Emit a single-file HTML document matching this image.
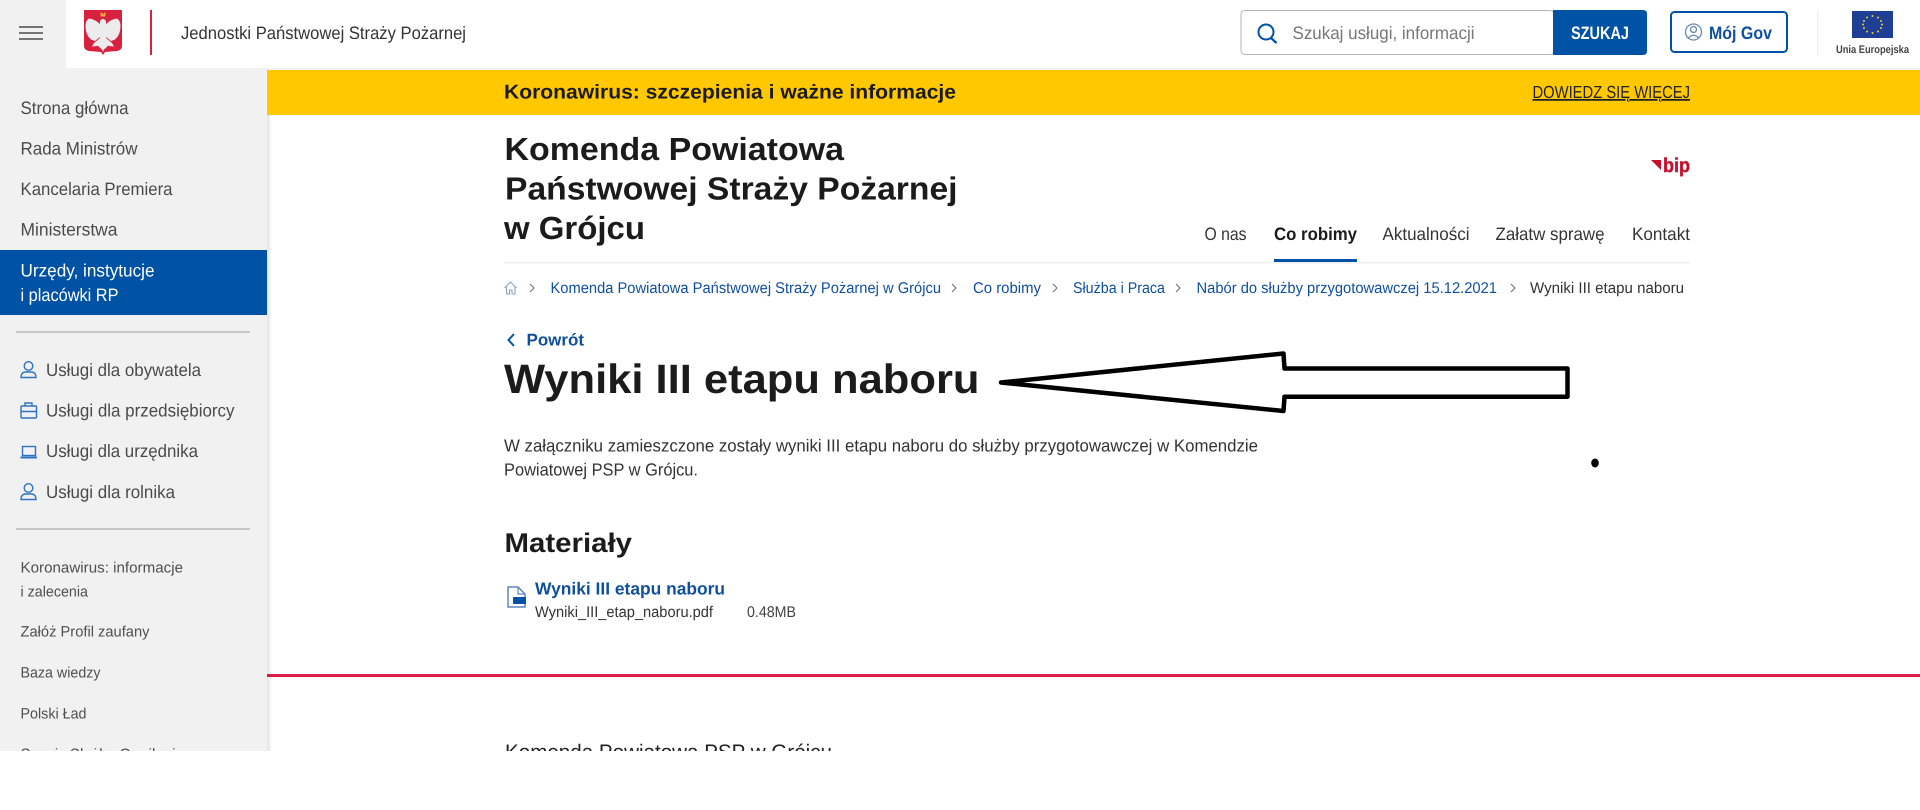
<!DOCTYPE html>
<html lang="pl"><head><meta charset="utf-8"><title>Wyniki III etapu naboru</title>
<style>
html,body{margin:0;padding:0;background:#fff;width:1920px;height:810px;overflow:hidden}
svg{display:block}
text{font-family:"Liberation Sans",sans-serif;text-rendering:geometricPrecision;white-space:pre}
.s{font-size:18px;fill:#4a4a4a}
.m{font-size:15px;fill:#4f4f4f}
.n{font-size:18px;fill:#333}
.b{font-size:15.5px;fill:#0f4f9e}
.i{fill:none;stroke:#2f72c4;stroke-width:1.4}
</style></head><body>
<svg xmlns="http://www.w3.org/2000/svg" width="1920" height="810" viewBox="0 0 1920 810">
<defs>
<linearGradient id="sh" x1="0" x2="1" y1="0" y2="0"><stop offset="0" stop-color="#e2e2e2"/><stop offset="1" stop-color="#fff"/></linearGradient>
<g id="wing"><path d="M101 25Q95 19 89 18.500Q85.500 20.500 85.500 26Q85.500 35 91 39.500L95 41L100 37Z"/><path d="M100 38L94 43L92 46.500L97 46L100 43Z"/></g>
</defs>
<rect width="1920" height="810" fill="#fff"/>

<!-- header -->
<rect x="0" y="68" width="1920" height="2" fill="#f1f1f1"/>
<rect x="0" y="0" width="66" height="68" fill="#f1f1f1"/>
<g fill="#757575"><rect x="19" y="26" width="24" height="2"/><rect x="19" y="32" width="24" height="2"/><rect x="19" y="38" width="24" height="2"/></g>
<path d="M84 10H122V46Q122 50 117 51L105 52L103 55L101 52L89 51Q84 50 84 46Z" fill="#d8203f"/>
<g fill="#ececec">
<use href="#wing"/><use href="#wing" transform="matrix(-1 0 0 1 206 0)"/>
<path d="M100 21Q103 17 106 21L106 38L109 45L104 49.500L103 52L102 49.500L97 45L100 38Z"/>
</g>
<path d="M100.500 12L103 14L105.500 12L105.500 16.500H100.500Z" fill="#e6a93b"/>
<rect x="150" y="10" width="2" height="45" fill="#d8203f"/>
<text x="181" y="39" font-size="18" fill="#333" textLength="285" lengthAdjust="spacingAndGlyphs">Jednostki Państwowej Straży Pożarnej</text>

<rect x="1241" y="10.500" width="313" height="44" rx="4" fill="#fff" stroke="#b5b5b5"/>
<path d="M1553 10H1643Q1647 10 1647 14V51Q1647 55 1643 55H1553Z" fill="#0052a5"/>
<circle cx="1266" cy="32" r="7.500" fill="none" stroke="#0052a5" stroke-width="2"/>
<path d="M1271 38L1276.500 43" stroke="#0052a5" stroke-width="2.300" fill="none"/>
<text x="1292.500" y="39" font-size="18" fill="#777" textLength="182" lengthAdjust="spacingAndGlyphs">Szukaj usługi, informacji</text>
<text x="1571" y="39" font-size="18" font-weight="700" fill="#fff" textLength="58" lengthAdjust="spacingAndGlyphs">SZUKAJ</text>
<rect x="1671" y="12" width="116" height="40" rx="3.500" fill="#fff" stroke="#0052a5" stroke-width="2"/>
<circle cx="1693.500" cy="32" r="8" fill="none" stroke="#6a88b8" stroke-width="1.300"/>
<circle cx="1693.500" cy="29.500" r="3" fill="none" stroke="#6a88b8" stroke-width="1.300"/>
<path d="M1688.500 38Q1693.500 32.500 1698.500 38" fill="none" stroke="#6a88b8" stroke-width="1.300"/>
<text x="1709" y="39" font-size="18" font-weight="700" fill="#0f4f9e" textLength="63" lengthAdjust="spacingAndGlyphs">Mój Gov</text>
<rect x="1817" y="10" width="1.500" height="46" fill="#efefef"/>
<rect x="1852" y="11" width="41" height="27" fill="#1f3f94"/>
<g fill="#e8d23a"><circle cx="1872.500" cy="16" r="1"/><circle cx="1878" cy="17.500" r="1"/><circle cx="1881" cy="21" r="1"/><circle cx="1882" cy="24.500" r="1"/><circle cx="1881" cy="28" r="1"/><circle cx="1878" cy="31.500" r="1"/><circle cx="1872.500" cy="33" r="1"/><circle cx="1867" cy="31.500" r="1"/><circle cx="1864" cy="28" r="1"/><circle cx="1863" cy="24.500" r="1"/><circle cx="1864" cy="21" r="1"/><circle cx="1867" cy="17.500" r="1"/></g>
<text x="1836" y="53" font-size="11" font-weight="700" fill="#444" textLength="73" lengthAdjust="spacingAndGlyphs">Unia Europejska</text>

<!-- sidebar -->
<rect x="0" y="70" width="267" height="690" fill="#f1f1f1"/>
<rect x="267" y="70" width="5" height="690" fill="url(#sh)"/>
<text class="s" x="20.500" y="114" textLength="108" lengthAdjust="spacingAndGlyphs">Strona główna</text>
<text class="s" x="20.500" y="154.500" textLength="117" lengthAdjust="spacingAndGlyphs">Rada Ministrów</text>
<text class="s" x="20.500" y="195" textLength="152" lengthAdjust="spacingAndGlyphs">Kancelaria Premiera</text>
<text class="s" x="20.500" y="235.500" textLength="97" lengthAdjust="spacingAndGlyphs">Ministerstwa</text>
<rect x="0" y="250" width="267" height="65" fill="#0052a5"/>
<text class="s" style="fill:#fff" x="20.500" y="276.500" textLength="134" lengthAdjust="spacingAndGlyphs">Urzędy, instytucje</text>
<text class="s" style="fill:#fff" x="20.500" y="301" textLength="98" lengthAdjust="spacingAndGlyphs">i placówki RP</text>
<rect x="16" y="331" width="234" height="2" fill="#c8c8c8"/>

<g class="i"><circle cx="28.500" cy="366" r="4.300"/><path d="M21 377.500Q21 372.500 25 372H32Q36 372.500 36 377.500Z"/></g>
<text class="s" x="46" y="376" textLength="155" lengthAdjust="spacingAndGlyphs">Usługi dla obywatela</text>
<g class="i"><rect x="21" y="406" width="15.500" height="12" rx="1"/><path d="M25 406V403H32V406M21 411.500H36.500"/></g>
<text class="s" x="46" y="416.500" textLength="188.500" lengthAdjust="spacingAndGlyphs">Usługi dla przedsiębiorcy</text>
<g class="i"><rect x="22.500" y="446.500" width="13" height="9"/><path d="M20.500 457.500H37" stroke-width="2"/></g>
<text class="s" x="46" y="457" textLength="152" lengthAdjust="spacingAndGlyphs">Usługi dla urzędnika</text>
<g class="i"><circle cx="28.500" cy="488" r="4.300"/><path d="M21 499.500Q21 494.500 25 494H32Q36 494.500 36 499.500Z"/></g>
<text class="s" x="46" y="498" textLength="129" lengthAdjust="spacingAndGlyphs">Usługi dla rolnika</text>
<rect x="16" y="528" width="234" height="2" fill="#c8c8c8"/>

<text class="m" x="20.500" y="572.500" textLength="162.500" lengthAdjust="spacingAndGlyphs">Koronawirus: informacje</text>
<text class="m" x="20.500" y="596.500" textLength="67.500" lengthAdjust="spacingAndGlyphs">i zalecenia</text>
<text class="m" x="20.500" y="636.500" textLength="129" lengthAdjust="spacingAndGlyphs">Załóż Profil zaufany</text>
<text class="m" x="20.500" y="677.500" textLength="80" lengthAdjust="spacingAndGlyphs">Baza wiedzy</text>
<text class="m" x="20.500" y="718.500" textLength="66" lengthAdjust="spacingAndGlyphs">Polski Ład</text>
<text class="m" x="20.500" y="759" textLength="155" lengthAdjust="spacingAndGlyphs">Serwis Służby Cywilnej</text>

<!-- banner -->
<rect x="267" y="70" width="1653" height="45" fill="#ffc800"/>
<text x="504" y="98.500" font-size="20" font-weight="700" fill="#1b1b1b" textLength="452" lengthAdjust="spacingAndGlyphs">Koronawirus: szczepienia i ważne informacje</text>
<text x="1532.500" y="98" font-size="17.500" fill="#222" text-decoration="underline" textLength="157.500" lengthAdjust="spacingAndGlyphs">DOWIEDZ SIĘ WIĘCEJ</text>

<!-- org title -->
<g font-size="32" font-weight="700" fill="#1b1b1b">
<text x="504.500" y="160" textLength="339.500" lengthAdjust="spacingAndGlyphs">Komenda Powiatowa</text>
<text x="505" y="199.500" textLength="452.500" lengthAdjust="spacingAndGlyphs">Państwowej Straży Pożarnej</text>
<text x="504" y="239" textLength="141" lengthAdjust="spacingAndGlyphs">w Grójcu</text>
</g>
<path d="M1651 160H1661V170Z" fill="#c8102e"/>
<text x="1663" y="172" font-size="20" font-weight="700" fill="#c8102e" stroke="#c8102e" stroke-width=".4" textLength="27" lengthAdjust="spacingAndGlyphs">bip</text>

<!-- nav -->
<text class="n" x="1204.500" y="240" textLength="42" lengthAdjust="spacingAndGlyphs">O nas</text>
<text class="n" x="1274" y="240" font-weight="700" style="fill:#1b1b1b" textLength="83" lengthAdjust="spacingAndGlyphs">Co robimy</text>
<text class="n" x="1382.500" y="240" textLength="87" lengthAdjust="spacingAndGlyphs">Aktualności</text>
<text class="n" x="1495.500" y="240" textLength="109" lengthAdjust="spacingAndGlyphs">Załatw sprawę</text>
<text class="n" x="1632" y="240" textLength="58" lengthAdjust="spacingAndGlyphs">Kontakt</text>
<rect x="504" y="262" width="1186" height="1.500" fill="#eeeeee"/>
<rect x="1274" y="259" width="83" height="3" fill="#0052a5"/>

<!-- breadcrumb -->
<path d="M504.500 288L510.500 282L516.500 288M506.500 286.500V294H509.500V290H512V294H515V286.500" fill="none" stroke="#8fa3bd" stroke-width="1.100"/>
<g fill="none" stroke="#5f6f82" stroke-width="1"><path d="M530 284L534 288L530 292"/><path d="M952 284L956 288L952 292"/><path d="M1053 284L1057 288L1053 292"/><path d="M1176 284L1180 288L1176 292"/><path d="M1511 284L1515 288L1511 292"/></g>
<text class="b" x="550.500" y="293" textLength="390.500" lengthAdjust="spacingAndGlyphs">Komenda Powiatowa Państwowej Straży Pożarnej w Grójcu</text>
<text class="b" x="973" y="293" textLength="68" lengthAdjust="spacingAndGlyphs">Co robimy</text>
<text class="b" x="1073" y="293" textLength="92" lengthAdjust="spacingAndGlyphs">Służba i Praca</text>
<text class="b" x="1196.500" y="293" textLength="300.500" lengthAdjust="spacingAndGlyphs">Nabór do służby przygotowawczej 15.12.2021</text>
<text class="b" style="fill:#333" x="1530" y="293" textLength="154" lengthAdjust="spacingAndGlyphs">Wyniki III etapu naboru</text>

<!-- content -->
<path d="M514 334L508.500 340L514 346" fill="none" stroke="#0052a5" stroke-width="2"/>
<text x="526.500" y="345.500" font-size="17" font-weight="700" fill="#0f4f9e" textLength="57.500" lengthAdjust="spacingAndGlyphs">Powrót</text>
<text x="504" y="393" font-size="41" font-weight="700" fill="#1b1b1b" textLength="475.500" lengthAdjust="spacingAndGlyphs">Wyniki III etapu naboru</text>
<path d="M1001 382.500L1283.500 353.500L1284.500 368.500H1567.500V396.700H1284.500L1283.500 411Z" fill="#fff" stroke="#000" stroke-width="4.500" stroke-linejoin="round"/>
<ellipse cx="1595" cy="463" rx="3.800" ry="4.500" fill="#000"/>
<text x="504" y="451.500" font-size="17.500" fill="#333" textLength="754" lengthAdjust="spacingAndGlyphs">W załączniku zamieszczone zostały wyniki III etapu naboru do służby przygotowawczej w Komendzie</text>
<text x="504" y="475.500" font-size="17.500" fill="#333" textLength="194" lengthAdjust="spacingAndGlyphs">Powiatowej PSP w Grójcu.</text>
<text x="504.500" y="552" font-size="27" font-weight="700" fill="#1b1b1b" textLength="127.500" lengthAdjust="spacingAndGlyphs">Materiały</text>
<path d="M508 587H518L525 594V607H508Z" fill="#fff" stroke="#5f86bf" stroke-width="1.500"/>
<path d="M518 587V594H525" fill="none" stroke="#5f86bf" stroke-width="1.200"/>
<rect x="513" y="597" width="13" height="7" rx="1" fill="#0052a5"/>
<text x="535" y="594.500" font-size="17.500" font-weight="700" fill="#0f4f9e" textLength="190" lengthAdjust="spacingAndGlyphs">Wyniki III etapu naboru</text>
<text x="535" y="617" font-size="15.500" fill="#333" textLength="178" lengthAdjust="spacingAndGlyphs">Wyniki_III_etap_naboru.pdf</text>
<text x="747" y="617" font-size="15.500" fill="#444" textLength="49" lengthAdjust="spacingAndGlyphs">0.48MB</text>
<rect x="267" y="674" width="1653" height="3" fill="#dc1e44"/>
<text x="505" y="759" font-size="21" fill="#222" textLength="327" lengthAdjust="spacingAndGlyphs">Komenda Powiatowa PSP w Grójcu</text>
<rect x="0" y="751" width="1920" height="60" fill="#fff"/>
</svg>
</body></html>
